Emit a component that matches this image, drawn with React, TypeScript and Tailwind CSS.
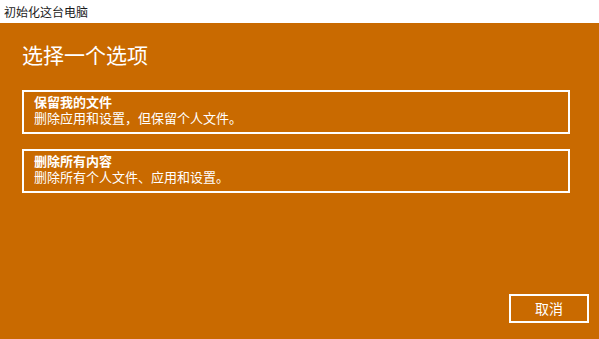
export default function App() {
  const font = { fontFamily: '"Noto Sans CJK SC", "Noto Sans", sans-serif' };
  return (
    <div className="flex h-[339px] w-[599px] flex-col bg-[#c96a00]" style={font}>
      <div className="flex h-[23px] items-center bg-white pl-[4px] text-[12px] text-[#1a1a1a]">
        初始化这台电脑
      </div>
      <div className="flex flex-1 flex-col pl-[22px] pr-[29px]">
        <h1 className="mt-[17px] text-[21px] leading-[28px] text-white">选择一个选项</h1>
        <div className="mt-[22px] flex flex-col gap-[15px]">
          <Option title="保留我的文件" desc="删除应用和设置，但保留个人文件。" />
          <Option title="删除所有内容" desc="删除所有个人文件、应用和设置。" />
        </div>
        <div className="mt-auto mb-[16px] -mr-[19px] flex justify-end">
          <button className="h-[29px] w-[80px] border-2 border-white text-[14px] text-white">取消</button>
        </div>
      </div>
    </div>
  );
}

function Option({ title, desc }: { title: string; desc: string }) {
  return (
    <div className="h-[44px] border-2 border-white pl-[10px] pt-[2px] text-[13px] leading-[16px] text-white">
      <div className="font-bold">{title}</div>
      <div>{desc}</div>
    </div>
  );
}
